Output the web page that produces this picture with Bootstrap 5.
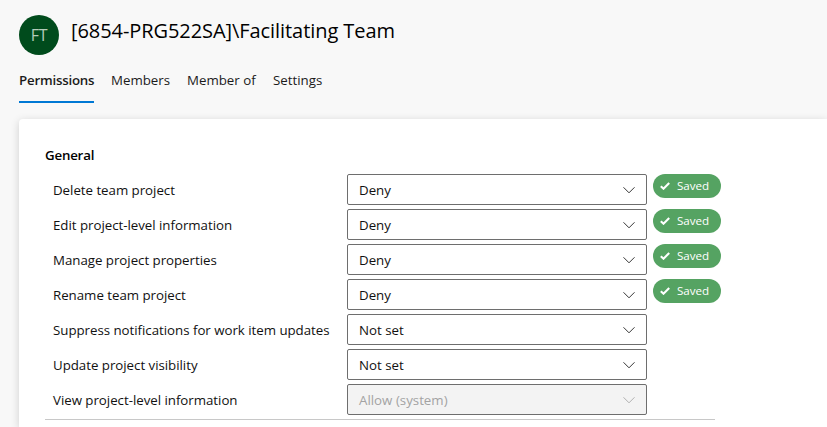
<!DOCTYPE html>
<html lang="en">
<head>
<meta charset="utf-8">
<meta name="viewport" content="width=device-width, initial-scale=1">
<title>Facilitating Team - Permissions</title>
<link href="https://cdn.jsdelivr.net/npm/bootstrap@5.3.0/dist/css/bootstrap.min.css" rel="stylesheet">
<style>
  body { font-family: "Segoe UI", "Open Sans", "Noto Sans", sans-serif; font-size: 13.3px; line-height: 20px; color: #111; background: #f8f8f8; height: 427px; overflow: hidden; }
  .page { padding-left: 19px; padding-top: 15px; height: 427px; }
  .avatar { width: 40px; height: 40px; background: #004b1c; color: #b4cbb9; font-size: 16px; letter-spacing: -.3px; }
  .group-name { font-size: 20px; line-height: 28px; font-weight: 500; margin: 2px 0 0 12px; letter-spacing: -.07px; color: #000; }
  .tabs { gap: 17px; margin-top: 15px; height: 33px; }
  .tabs .nav-link { color: #1b1b1b; padding: 0; height: 33px; line-height: 20px; white-space: nowrap; }
  .tabs .nav-link.active { font-weight: 600; letter-spacing: -.21px; border-bottom: 2px solid #0078d4; }
  .t1 { width: 75px; } .t2 { width: 59px; } .t3 { width: 69px; }
  .panel { margin-top: 16px; padding: 26px 0 0 26px; border-radius: 4px 0 0 0; box-shadow: 0 2px 8px rgba(0,0,0,.17); }
  .section-title { font-size: 13.3px; line-height: 20px; font-weight: 600; letter-spacing: -.2px; margin: 0 0 9px; color: #000; }
  .perms { width: 670px; height: 246px; border-bottom: 1px solid #c8c8c8; }
  .perm { height: 35px; flex-wrap: nowrap; }
  .perm-name { width: 302px; padding: 6px 0 0 8px; white-space: nowrap; letter-spacing: -.03px; }
  .picker { width: 300px; height: 31px; border: 1px solid #6e6e6e; border-radius: 2px; background: #fff; padding: 0 11px; font-size: inherit; line-height: 20px; color: #111; }
  .picker:disabled { opacity: 1; background: #f3f3f3; border-color: #6e6e6e; color: #a3a3a3; }
  .saved { width: 68px; height: 24px; margin-left: 6px; padding: 0 0 0 7px; background: #55a362; font-size: 11.6px; font-weight: 400; line-height: 24px; gap: 7px; }
</style>
</head>
<body>
<main class="page d-flex flex-column">
  <header class="d-flex align-items-start">
    <div class="avatar rounded-circle d-flex align-items-center justify-content-center flex-shrink-0">FT</div>
    <h1 class="group-name"><span>[6854-PRG522SA]\Facilitating Team</span></h1>
  </header>
  <nav class="tabs nav flex-nowrap">
    <a class="nav-link active t1" href="#">Permissions</a>
    <a class="nav-link t2" href="#">Members</a>
    <a class="nav-link t3" href="#">Member of</a>
    <a class="nav-link" href="#">Settings</a>
  </nav>
  <section class="panel bg-white flex-grow-1">
    <h2 class="section-title">General</h2>
    <div class="perms" id="perms"></div>
  </section>
</main>
<script src="https://cdn.jsdelivr.net/npm/bootstrap@5.3.0/dist/js/bootstrap.bundle.min.js"></script>
<script>
  const rows = [
    ["Delete team project", "Deny", true],
    ["Edit project-level information", "Deny", true],
    ["Manage project properties", "Deny", true],
    ["Rename team project", "Deny", true],
    ["Suppress notifications for work item updates", "Not set", false],
    ["Update project visibility", "Not set", false],
    ["View project-level information", "Allow (system)", false]
  ];
  const chevron = '<svg width="12" height="8" viewBox="0 0 12 8" fill="none" stroke="currentColor" stroke-width=".85"><path d="M.5 1.300 6 6.800l5.500-5.500"/></svg>';
  const check = '<svg width="10" height="8" viewBox="0 0 10 8" fill="none" stroke="#fff" stroke-width="2.1"><path d="M.8 4.300 3.500 6.700 9.200 1"/></svg>';
  document.getElementById("perms").innerHTML = rows.map(([name, value, saved]) => `
    <div class="perm d-flex align-items-start">
      <div class="perm-name flex-shrink-0"><span>${name}</span></div>
      <button type="button" class="picker btn d-flex align-items-center justify-content-between flex-shrink-0"${value.startsWith("Allow") ? " disabled" : ""}><span>${value}</span>${chevron}</button>
      ${saved ? `<span class="saved badge rounded-pill d-flex align-items-center flex-shrink-0">${check}<span>Saved</span></span>` : ""}
    </div>`).join("");
</script>
</body>
</html>
